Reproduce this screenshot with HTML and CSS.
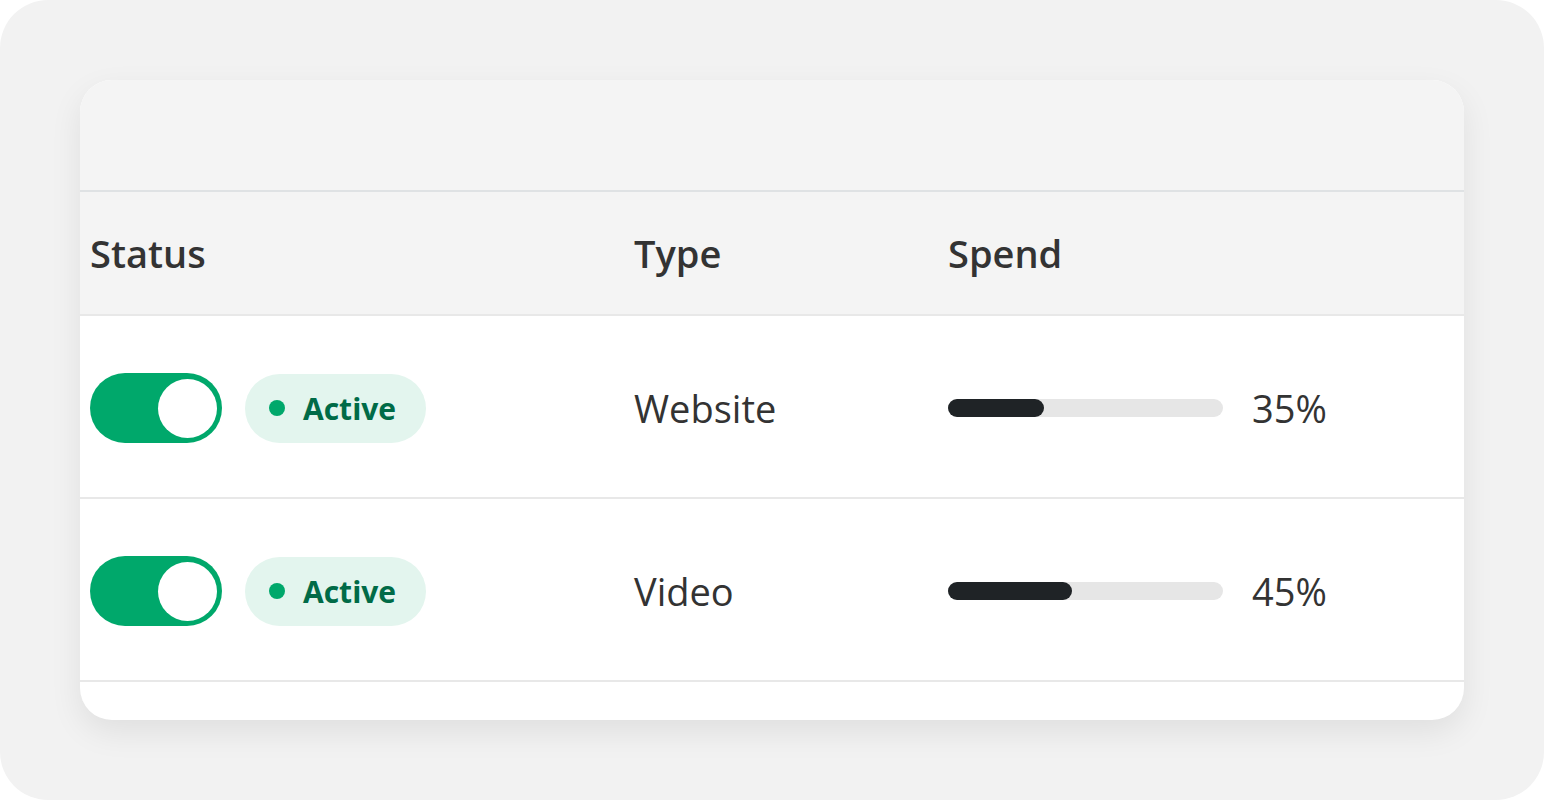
FILE: index.html
```html
<!DOCTYPE html>
<html>
<head>
<meta charset="utf-8">
<link rel="stylesheet" href="styles.css">
</head>
<body>
<div class="frame">
  <div class="card">
    <div class="card-top"></div>
    <div class="row head">
      <div class="cell">Status</div>
      <div class="cell">Type</div>
      <div class="cell">Spend</div>
    </div>
    <div class="row body">
      <div class="cell status">
        <span class="toggle"><span class="thumb"></span></span>
        <span class="badge"><span class="dot"></span>Active</span>
      </div>
      <div class="cell">Website</div>
      <div class="cell spend">
        <span class="bar"><span class="fill" style="width:35%"></span></span>
        <span class="pct">35%</span>
      </div>
    </div>
    <div class="row body">
      <div class="cell status">
        <span class="toggle"><span class="thumb"></span></span>
        <span class="badge"><span class="dot"></span>Active</span>
      </div>
      <div class="cell">Video</div>
      <div class="cell spend">
        <span class="bar"><span class="fill" style="width:45%"></span></span>
        <span class="pct">45%</span>
      </div>
    </div>
    <div class="card-bottom"></div>
  </div>
</div>
</body>
</html>
```

FILE: styles.css
```css
html, body {
  margin: 0;
  padding: 0;
  background: #ffffff;
}
body {
  font-family: "Open Sans", "Noto Sans", sans-serif;
  color: #333333;
}
.frame {
  width: 1544px;
  height: 800px;
  box-sizing: border-box;
  background: #f2f2f2;
  border-radius: 48px;
  padding: 80px 80px;
}
.card {
  width: 1384px;
  height: 640px;
  background: #ffffff;
  border-radius: 32px;
  overflow: hidden;
  box-shadow: 0 12px 32px rgba(0, 0, 0, 0.08);
  display: flex;
  flex-direction: column;
}
.card-top {
  height: 110px;
  flex: none;
  background: #f4f4f4;
  border-bottom: 2px solid #dfe2e4;
}
.row {
  display: grid;
  grid-template-columns: 544px 314px 1fr;
  height: 181px;
  flex: none;
  box-sizing: content-box;
  border-bottom: 2px solid #e8e8e8;
  font-size: 38px;
}
.row.body .cell {
  padding-top: 3px;
}
.row.head {
  height: 122px;
  background: #f4f4f4;
  font-weight: 600;
}
.cell {
  display: flex;
  align-items: center;
  padding-left: 10px;
  box-sizing: border-box;
}
.status {
  gap: 23px;
}
.toggle {
  width: 132px;
  height: 70px;
  box-sizing: border-box;
  background: #00a86b;
  border-radius: 35px;
  display: flex;
  align-items: center;
  justify-content: flex-end;
  padding-right: 5px;
}
.thumb {
  width: 59px;
  height: 59px;
  border-radius: 50%;
  background: #ffffff;
}
.badge {
  height: 69px;
  box-sizing: border-box;
  background: #e3f5ee;
  border-radius: 35px;
  display: flex;
  align-items: center;
  padding: 0 30px 0 24px;
  gap: 18px;
  font-size: 30px;
  font-weight: 700;
  color: #006b47;
}
.dot {
  width: 16px;
  height: 16px;
  border-radius: 50%;
  background: #00a86b;
}
.spend {
  gap: 29px;
}
.bar {
  width: 275px;
  height: 18px;
  border-radius: 9px;
  background: #e6e6e6;
  display: flex;
}
.fill {
  height: 100%;
  border-radius: 9px;
  background: #1f2326;
}
.card-bottom {
  flex: 1;
}
```
